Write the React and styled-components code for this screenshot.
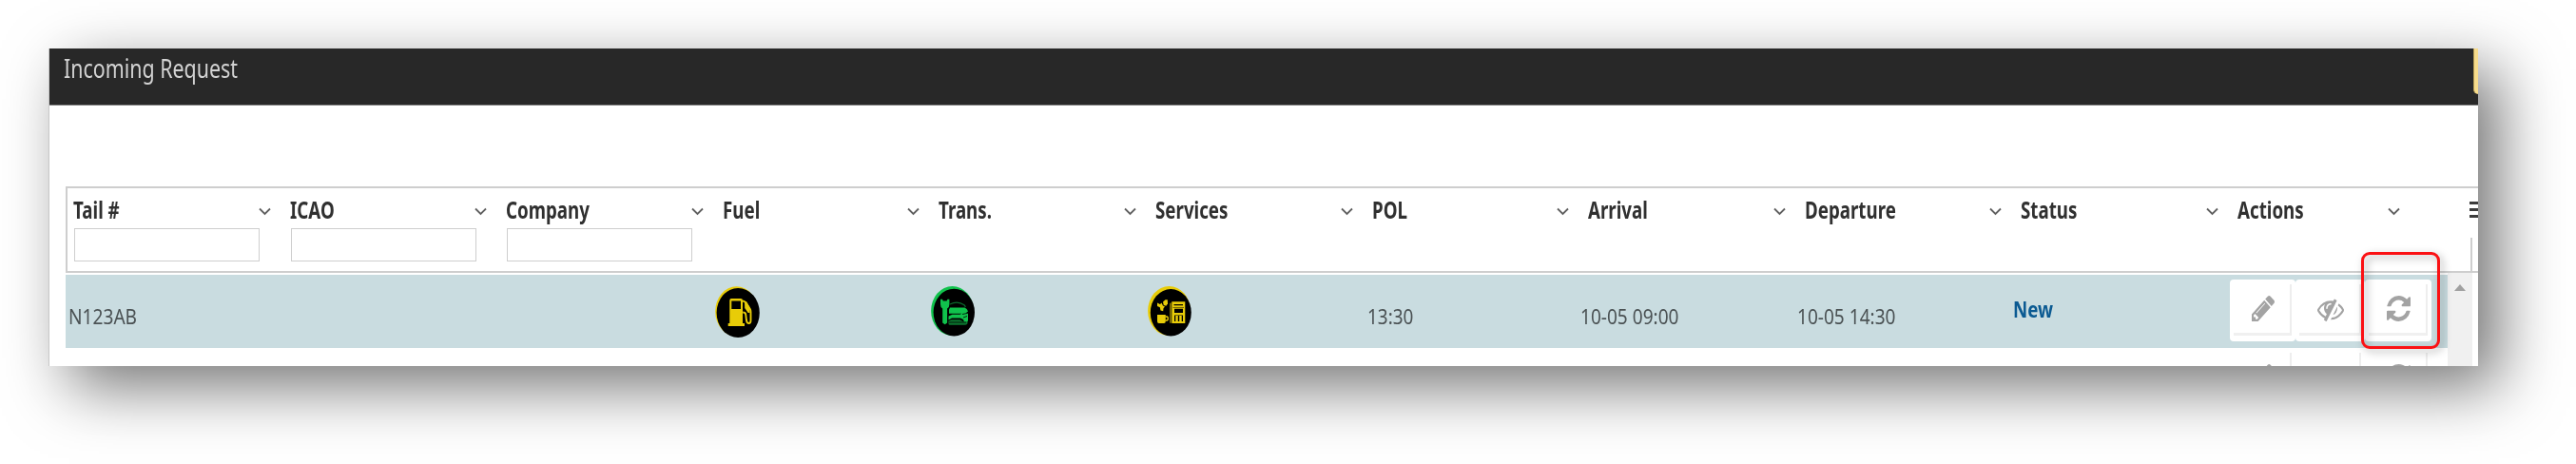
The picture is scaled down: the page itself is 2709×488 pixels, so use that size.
import React from "react";
import styled, { createGlobalStyle } from "styled-components";

const GlobalStyle = createGlobalStyle`
  *, *::before, *::after { box-sizing: border-box; }
  body {
    margin: 0;
    background: #fff;
    overflow: hidden;
    font-family: "Noto Sans", "Open Sans", sans-serif;
  }
`;

const Page = styled.div`
  width: 2709px;
  height: 488px;
  padding: 51px 0 0 51px;
  overflow: hidden;
`;

const Window = styled.main`
  width: 2555px;
  height: 334px;
  background: #fff;
  box-shadow: 22px 22px 62px rgba(0, 0, 0, 0.54);
`;

const Clip = styled.div`
  height: 100%;
  overflow: hidden;
  border-left: 1px solid #c8c8c8;
`;

const TitleBar = styled.header`
  display: flex;
  justify-content: space-between;
  height: 60px;
  margin-left: -1px;
  background: #282828;
  border-bottom: 1px solid #7c7c7c;
`;

const Squeezed = styled.span`
  display: inline-block;
  white-space: nowrap;
  transform: scaleX(${(p) => p.$x});
  transform-origin: 0 50%;
`;

const Title = styled.h1`
  margin: 0 0 0 16px;
  font-size: 27px;
  font-weight: 400;
  line-height: 41px;
  color: #d2d2d2;
`;

const CornerButton = styled.div`
  width: 5px;
  height: 48px;
  background: #f7dc8c;
  border-left: 1px solid #b39c58;
  border-bottom-left-radius: 5px;
`;

const Grid = styled.section`
  margin: 85px 0 0 17px;
`;

const HeaderRow = styled.div`
  display: flex;
  height: 91px;
  border: 2px solid #cecece;
  border-right: 0;
`;

const HeaderCell = styled.div`
  flex: none;
  width: ${(p) => p.$w || 227.6}px;
  padding: 6px 0 0 6px;
`;

const HeaderTop = styled.div`
  display: flex;
  justify-content: space-between;
  align-items: center;
  height: 31px;
  padding-right: 14px;
`;

const HeaderLabel = styled.div`
  font-size: 24.5px;
  font-weight: 700;
  line-height: 31px;
  padding-top: 2px;
  color: #303030;
`;

const Chevron = styled.svg`
  width: 13px;
  height: 9px;
  margin-top: 5px;
`;

const Filter = styled.input`
  display: block;
  width: 195px;
  height: 35px;
  margin: 5px 0 0 1px;
  border: 1.5px solid #cecece;
  background: #fff;
  padding: 0 4px;
`;

const MenuColumn = styled.div`
  flex: 1;
  display: flex;
  flex-direction: column;
  justify-content: space-between;
  padding-left: 45px;
`;

const MenuIcon = styled.div`
  height: 17px;
  margin: 14px 0 0 14px;
  border-top: 3px solid #3c3c3c;
  border-bottom: 3px solid #3c3c3c;
  display: flex;
  align-items: center;
  &::after {
    content: "";
    width: 100%;
    height: 3px;
    background: #3c3c3c;
  }
`;

const MenuDivider = styled.div`
  height: 35px;
  margin-left: 15px;
  border-left: 2px solid #cecece;
`;

const Body = styled.div`
  display: flex;
`;

const Rows = styled.div`
  width: 2505px;
  padding-top: 2px;
`;

const Row = styled.div`
  display: flex;
  height: 77px;
  background: ${(p) => (p.$selected ? "#c9dce0" : "#fff")};
`;

const Cell = styled.div`
  flex: none;
  width: ${(p) => p.$w || 227.6}px;
  padding: ${(p) => p.$pad || "29px 0 0 3px"};
  font-size: 22px;
  line-height: 28px;
  color: #4b5254;
`;

const Status = styled.strong`
  display: block;
  font-size: 24px;
  font-weight: 700;
  line-height: 30px;
  color: #0b5a92;
`;

const ServiceBadge = styled.svg`
  display: block;
  width: 47px;
  height: 54px;
`;

const Actions = styled.div`
  display: flex;
`;

const ActionButton = styled.button`
  display: flex;
  width: ${(p) => p.$w}px;
  height: 65px;
  padding: 5px 4px 6px 4px;
  border: 0;
  border-radius: 4px;
  background: #fff;
`;

const ButtonFace = styled.span`
  flex: 1;
  display: flex;
  justify-content: center;
  padding: 12px 0 0 3px;
  border-right: 2px solid #eee;
  border-bottom: 3px solid #f0f0f0;
`;

const Glyph = styled.svg`
  width: ${(p) => p.$w}px;
  height: ${(p) => p.$h}px;
  margin-top: ${(p) => p.$t || 0}px;
  fill: #a3a3a3;
`;

const Scrollbar = styled.div`
  width: 26px;
  height: 99px;
  background: #f0f0f0;
  padding: 12px 0 0 7px;
`;

const ScrollUp = styled.div`
  width: 0;
  border: 6px solid transparent;
  border-top: 0;
  border-bottom: 7px solid #a0a0a0;
`;

const Highlight = styled.div`
  position: absolute;
  left: 2483px;
  top: 265px;
  width: 83px;
  height: 102px;
  border: 3px solid #fb1114;
  border-radius: 9px;
  filter: drop-shadow(3px 3px 4px rgba(0, 0, 0, 0.35));
`;

function FuelBadge() {
  return (
    <ServiceBadge viewBox="0 0 47 54">
      <ellipse cx="22.5" cy="26.5" rx="22.3" ry="26.3" fill="#e8cc08" />
      <ellipse cx="24.2" cy="28" rx="22.6" ry="26" fill="#000" />
      <path fill="#e8cc08" fillRule="evenodd" d="M17 13h10q2 0 2 2v24h2v3H13.7v-3h1.6V15q0-2 1.700-2zM17.300 15.500v8.500h9.700v-8.500z" />
      <path fill="none" stroke="#e8cc08" strokeWidth="1.900" d="M29 15.500q2 0 3.800 2.800l4 5.700q.7 1.200.7 3v9q0 3-2 3t-2.500-3l-.8-6.500q-.3-2-3-2" />
      <path fill="#e8cc08" d="M31 16l2 0 3.500 6v6h-1.800l-3.500-5z" />
    </ServiceBadge>
  );
}

function TransBadge() {
  return (
    <ServiceBadge viewBox="0 0 47 54">
      <ellipse cx="22.500" cy="26" rx="22.400" ry="26" fill="#10c24c" />
      <ellipse cx="24.300" cy="27.600" rx="21.700" ry="24.900" fill="#000" />
      <g fill="#10c24c">
        <path d="M10 13.800h2l.8 1.600h3.800l.8-1.600h2v5.200q0 3.500-2.300 4.500v15l-2.400 1.800-2.500-1.800v-15Q10 22.500 10 19z" />
        <path d="M20 22.500h15.500q2.500 1 3.500 4l-2 1.500 2 1v7.500l-2 1h-2l-1-2.500-3-1.500H22l-3.500 2v-4l4-1.800h8l2-1H19v-4z" />
        <path d="M18.500 36.500l3-1.200h9l3.500 2 4.500-1v3q-1 1.500-3 1.500H20q-1.500 0-1.500-1.500z" opacity=".6" />
      </g>
      <path fill="none" stroke="#0a6b2c" strokeWidth="1.200" d="M20 19q8-4.200 15 .8l1.500 2" />
      <path stroke="#000" strokeWidth=".8" d="M19 38h18M33 29.500l5-1M34 33l4-1.500" />
    </ServiceBadge>
  );
}

function ServicesBadge() {
  return (
    <ServiceBadge viewBox="0 0 47 54">
      <ellipse cx="22.500" cy="26" rx="22.400" ry="26" fill="#e8cc08" />
      <ellipse cx="24.300" cy="27.800" rx="21.500" ry="24.700" fill="#000" />
      <g fill="#e8cc08">
        <path d="M10 30h8.800v7q0 2-1.700 2h-5.400Q10 39 10 37z" />
        <path fillRule="evenodd" d="M18.500 31.300h2q1.500 0 1.500 2.700t-1.700 2.700h-1.800v-1.400h1.300q.8 0 .8-1.300t-.8-1.300h-1.300z" />
        <path d="M10 17.500l3 1.500 1.500-1.500 1.500 3 2 1-1.500 1.800-.3 3-2.700-.8-.7-3.200L10 21z" />
        <path d="M16 16.500l2.500-2.200 2.300 0 .2 4-1.700 2.400-2.500-.7z" />
        <path d="M23.200 18l1.400-.8v21.500h-1.400z" opacity=".7" />
        <path fillRule="evenodd" d="M25.300 16.300h14V39h-14zM27.500 19v1.300h9.500V19zM28 23.800v4.200h9v-4.200zM28 30.500V37h9v-6.500zM26.500 22v.6h11.500V22z" />
        <path d="M29.300 31h2.500v6h-2.500zM33.200 31h2.500v6h-2.500z" />
      </g>
    </ServiceBadge>
  );
}

const PencilIcon = () => (
  <Glyph $w={24} $h={27} viewBox="128 149 1515 1515" preserveAspectRatio="none">
    <path d="M491 1536l91-91-235-235-91 91v107h128v128h107zm523-928q0-22-22-22-10 0-17 7l-542 542q-7 7-7 17 0 22 22 22 10 0 17-7l542-542q7-7 7-17zm-54-192l416 416-832 832h-416v-416zm683 96q0 53-37 90l-166 166-416-416 166-165q36-38 90-38 53 0 91 38l235 234q37 39 37 91z" />
  </Glyph>
);

const EyeSlashIcon = () => (
  <Glyph $w={28} $h={24} $t={3} viewBox="0 256 1792 1376" preserveAspectRatio="none">
    <path d="M555 1335l78-141q-87-63-136-159t-49-203q0-121 61-225-229 117-381 353 167 258 427 375zm389-759q0-20-14-34t-34-14q-125 0-214.500 89.500t-89.500 214.500q0 20 14 34t34 14 34-14 14-34q0-86 61-147t147-61q20 0 34-14t14-34zm363-191q0 7-1 9-106 189-316 567t-315 566l-49 89q-10 16-28 16-12 0-134-70-16-10-16-28 0-12 44-87-143-65-263.500-173t-208.500-245q-20-31-20-69t20-69q153-235 380-371t496-136q89 0 180 17l54-97q10-16 28-16 5 0 18 6t31 15.500 33 18.500 31.500 18.500 19.500 11.500q16 10 16 27zm37 447q0 139-79 253.500t-209 164.500l280-502q8 45 8 84zm448 128q0 35-20 69-39 64-109 145-150 172-347.500 267t-419.500 95l74-132q212-18 392.500-137t301.500-307q-115-179-282-294l63-112q95 64 182.500 153t144.500 184q20 34 20 69z" />
  </Glyph>
);

const RefreshIcon = () => (
  <Glyph $w={25} $h={27} viewBox="0 0 1536 1536" preserveAspectRatio="none">
    <path d="M1511 928q0 5-1 7-64 268-268 434.500t-478 166.500q-146 0-282.500-55t-243.500-157l-129 129q-19 19-45 19t-45-19-19-45v-448q0-26 19-45t45-19h448q26 0 45 19t19 45-19 45l-137 137q71 66 161 102t187 36q134 0 250-65t186-179q11-17 53-117 8-23 30-23h192q13 0 22.500 9.500t9.500 22.500zm25-800v448q0 26-19 45t-45 19h-448q-26 0-45-19t-19-45 19-45l138-138q-148-137-349-137-134 0-250 65t-186 179q-11 17-53 117-8 23-30 23h-199q-13 0-22.500-9.500t-9.500-22.500v-7q65-268 270-434.500t480-166.500q146 0 284 55.500t245 156.500l130-129q19-19 45-19t45 19 19 45z" />
  </Glyph>
);

function RowActions() {
  return (
    <Actions>
      <ActionButton $w={69}><ButtonFace><PencilIcon /></ButtonFace></ActionButton>
      <ActionButton $w={73}><ButtonFace><EyeSlashIcon /></ButtonFace></ActionButton>
      <ActionButton $w={70}><ButtonFace><RefreshIcon /></ButtonFace></ActionButton>
    </Actions>
  );
}

const columns = [
  { label: "Tail #", filter: true },
  { label: "ICAO", filter: true },
  { label: "Company", filter: true },
  { label: "Fuel" },
  { label: "Trans." },
  { label: "Services" },
  { label: "POL" },
  { label: "Arrival" },
  { label: "Departure" },
  { label: "Status" },
  { label: "Actions", width: 191 },
];

export default function App() {
  return (
    <Page>
      <GlobalStyle />
      <Window>
        <Clip>
          <TitleBar>
            <Title><Squeezed $x={0.793}>Incoming Request</Squeezed></Title>
            <CornerButton />
          </TitleBar>
          <Grid>
            <HeaderRow>
              {columns.map((c) => (
                <HeaderCell key={c.label} $w={c.width}>
                  <HeaderTop>
                    <HeaderLabel><Squeezed $x={0.765}>{c.label}</Squeezed></HeaderLabel>
                    <Chevron viewBox="0 0 13 9">
                      <path d="M1 1.500l5.500 5.500L12 1.500" fill="none" stroke="#606060" strokeWidth="1.800" />
                    </Chevron>
                  </HeaderTop>
                  {c.filter && <Filter aria-label={c.label} />}
                </HeaderCell>
              ))}
              <MenuColumn>
                <MenuIcon />
                <MenuDivider />
              </MenuColumn>
            </HeaderRow>
            <Body>
              <Rows>
                <Row $selected>
                  <Cell><Squeezed $x={0.87}>N123AB</Squeezed></Cell>
                  <Cell />
                  <Cell />
                  <Cell $pad="12px 0 0 0"><FuelBadge /></Cell>
                  <Cell $pad="12px 0 0 0"><TransBadge /></Cell>
                  <Cell $pad="12px 0 0 0"><ServicesBadge /></Cell>
                  <Cell><Squeezed $x={0.86}>13:30</Squeezed></Cell>
                  <Cell $pad="29px 0 0 0"><Squeezed $x={0.867}>10-05 09:00</Squeezed></Cell>
                  <Cell $pad="29px 0 0 0"><Squeezed $x={0.867}>10-05 14:30</Squeezed></Cell>
                  <Cell $pad="21px 0 0 0"><Status><Squeezed $x={0.78}>New</Squeezed></Status></Cell>
                  <Cell $w={228} $pad="5px 0 0 0"><RowActions /></Cell>
                </Row>
                <Row>
                  {columns.slice(0, 10).map((c) => <Cell key={c.label} />)}
                  <Cell $w={228} $pad="0"><RowActions /></Cell>
                </Row>
              </Rows>
              <Scrollbar><ScrollUp /></Scrollbar>
            </Body>
          </Grid>
        </Clip>
      </Window>
      <Highlight />
    </Page>
  );
}
